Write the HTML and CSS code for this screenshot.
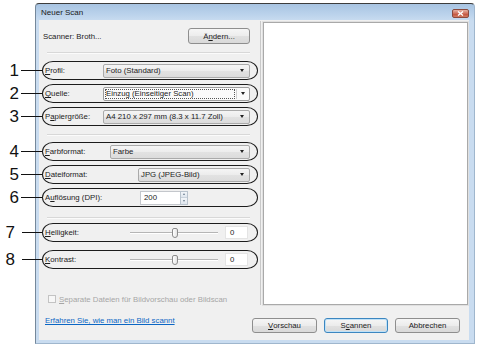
FILE: index.html
```html
<!DOCTYPE html>
<html lang="de">
<head>
<meta charset="utf-8">
<title>Neuer Scan</title>
<link rel="stylesheet" href="styles.css">
</head>
<body>
<div class="window">
  <div class="titlebar">
    <span class="title">Neuer Scan</span>
    <span class="close"><svg width="7" height="5" viewBox="0 0 7 5"><path d="M1 0.5 L6 4.5 M6 0.5 L1 4.5" stroke="#fff" stroke-width="1.4" fill="none"/></svg></span>
  </div>
  <div class="client">
    <div class="settings">
      <div class="scanner-row">
        <span class="label">Scanner: Broth...</span>
        <button class="btn btn--change">Ä<u>n</u>dern...</button>
      </div>
      <div class="sep sep--a"></div>

      <div class="row">
        <span class="callout"><span class="num">1</span><span class="leader"></span></span>
        <span class="label"><u>P</u>rofil:</span>
        <span class="combo combo--wide"><span class="value">Foto (Standard)</span><span class="arrow"></span></span>
      </div>
      <div class="row">
        <span class="callout"><span class="num">2</span><span class="leader"></span></span>
        <span class="label"><u>Q</u>uelle:</span>
        <span class="combo combo--wide combo--edit"><span class="field">Einzug (Einseitiger Scan)</span><span class="drop"><span class="arrow"></span></span></span>
      </div>
      <div class="row">
        <span class="callout"><span class="num">3</span><span class="leader"></span></span>
        <span class="label">P<u>a</u>piergröße:</span>
        <span class="combo combo--wide"><span class="value">A4 210 x 297 mm (8.3 x 11.7 Zoll)</span><span class="arrow"></span></span>
      </div>
      <div class="sep sep--b"></div>

      <div class="row">
        <span class="callout"><span class="num">4</span><span class="leader"></span></span>
        <span class="label"><u>F</u>arbformat:</span>
        <span class="combo combo--mid"><span class="value">Farbe</span><span class="arrow"></span></span>
      </div>
      <div class="row">
        <span class="callout"><span class="num">5</span><span class="leader"></span></span>
        <span class="label"><u>D</u>ateiformat:</span>
        <span class="combo combo--narrow"><span class="value">JPG (JPEG-Bild)</span><span class="arrow"></span></span>
      </div>
      <div class="row">
        <span class="callout"><span class="num">6</span><span class="leader"></span></span>
        <span class="label">A<u>u</u>flösung (DPI):</span>
        <span class="spin"><span class="spin-input">200</span><span class="spin-btns"><span class="spin-up"></span><span class="spin-down"></span></span></span>
      </div>
      <div class="sep sep--c"></div>

      <div class="row">
        <span class="callout callout--gap"><span class="num">7</span><span class="leader"></span></span>
        <span class="label"><u>H</u>elligkeit:</span>
        <span class="slider-group"><span class="slider"><span class="thumb"></span></span><span class="value-box">0</span></span>
      </div>
      <div class="row row--spaced">
        <span class="callout callout--gap"><span class="num">8</span><span class="leader"></span></span>
        <span class="label"><u>K</u>ontrast:</span>
        <span class="slider-group"><span class="slider"><span class="thumb"></span></span><span class="value-box">0</span></span>
      </div>

      <div class="check-row">
        <span class="check"></span>
        <span class="check-label"><u>S</u>eparate Dateien für Bildvorschau oder Bildscan</span>
      </div>
    </div>

    <div class="preview"><div class="preview-box"></div></div>

    <div class="footer">
      <a class="link" href="#">Erfahren Sie, wie man ein Bild scannt</a>
      <div class="buttons">
        <button class="btn btn--wide"><u>V</u>orschau</button>
        <button class="btn btn--default">S<u>c</u>annen</button>
        <button class="btn btn--wide">Abbrechen</button>
      </div>
    </div>
  </div>
</div>
</body>
</html>
```

FILE: styles.css
```css
* { box-sizing: border-box; }

html, body {
  margin: 0;
  padding: 0;
  background: #ffffff;
}

body {
  width: 500px;
  height: 350px;
  overflow: hidden;
  font-family: "Liberation Sans", Arial, sans-serif;
  font-size: 7.8px;
  color: #1b1b1b;
}

/* window frame */
.window {
  margin: 3px 0 0 35px;
  width: 440px;
  height: 341px;
  border: 1px solid #9fb6cd;
  border-top-color: #3d3d3d;
  border-left-color: #75889b;
  border-radius: 4px 4px 0 0;
  background: linear-gradient(#a8c4e2, #bad2eb 10px, #c9dcf0 17px, #c9dcf0);
  padding: 0 5px 3px 3px;
  display: flex;
  flex-direction: column;
}

.titlebar {
  height: 16px;
  display: flex;
  align-items: flex-end;
  padding: 0 0 2px 2px;
}

.title {
  font-size: 8px;
  line-height: 10px;
  color: #1a1a1a;
}

.close {
  margin-left: auto;
  width: 17px;
  height: 9px;
  border: 1px solid #8a4a3e;
  border-radius: 2px;
  background: linear-gradient(#e6b2a4, #cf6e5a 50%, #c0513c 55%, #d37c62);
  display: flex;
  align-items: center;
  justify-content: center;
}

.close svg { display: block; }

/* client area */
.client {
  flex: 1;
  background: #f0f0f0;
  display: grid;
  grid-template-columns: 220px 1fr;
  grid-template-rows: 1fr auto;
  padding-bottom: 7px;
}

.settings {
  grid-column: 1;
  grid-row: 1;
  padding: 7px 1px 0 3px;
  display: flex;
  flex-direction: column;
}

.scanner-row {
  height: 18px;
  display: flex;
  align-items: center;
  padding: 0 8px 0 1px;
}

.label {
  flex: 1;
  white-space: nowrap;
}

.sep {
  height: 2px;
  border-top: 1px solid #d8d8d8;
  border-bottom: 1px solid #fbfbfb;
  margin-left: 5px;
  margin-right: 8px;
}
.sep--a { margin-top: 7px; margin-bottom: 5px; }
.sep--b { margin-top: 6px; margin-bottom: 4px; }
.sep--c { margin-top: 8px; margin-bottom: 2px; }

/* annotated rows */
.row {
  position: relative;
  height: 23px;
  display: flex;
  align-items: center;
  padding: 0 8px 0 3px;
}

.row--spaced { margin-top: 4px; }

.row::before {
  content: "";
  position: absolute;
  left: 0;
  right: 0;
  top: 2px;
  bottom: 2px;
  border: 1.5px solid #1c1c1c;
  border-radius: 11px / 50%;
  pointer-events: none;
}

.callout {
  position: absolute;
  right: 100%;
  top: 0;
  bottom: 0;
  display: flex;
  align-items: center;
}

.num {
  font-size: 17px;
  line-height: 17px;
  color: #111;
  margin-right: 2px;
}

.leader {
  width: 21px;
  height: 1.6px;
  background: #111;
}

.callout--gap .num { margin-right: 7px; }
.callout--gap .leader { width: 20px; }

/* combo boxes */
.combo {
  height: 14px;
  display: flex;
  align-items: center;
  border: 1px solid #aaaaaa;
  border-radius: 2px;
  background: linear-gradient(#f5f5f5, #ececec 50%, #e2e2e2 51%, #dcdcdc);
  padding: 0 5px 0 2px;
  white-space: nowrap;
}

.combo--wide { width: 147px; }
.combo--mid { width: 140px; }
.combo--narrow { width: 112px; }

.combo .value {
  flex: 1;
  overflow: hidden;
}

.arrow {
  width: 0;
  height: 0;
  border-left: 2.5px solid transparent;
  border-right: 2.5px solid transparent;
  border-top: 3px solid #222;
}

.combo--edit {
  background: #fafafa;
  border-color: #9c9c9c;
  padding: 1px;
}

.combo--edit .field {
  flex: 1;
  height: 100%;
  display: flex;
  align-items: center;
  padding-left: 1px;
  outline: 1px dotted #555;
  outline-offset: -1px;
}

.combo--edit .drop {
  width: 12px;
  height: 100%;
  margin-left: 1px;
  border-left: 1px solid #cfcfcf;
  display: flex;
  align-items: center;
  justify-content: center;
}

/* spinner */
.spin {
  width: 48px;
  height: 14px;
  margin-right: 62px;
  display: flex;
}

.spin-input {
  flex: 1;
  background: #fff;
  border: 1px solid #c4c7cc;
  border-right: none;
  padding-left: 3px;
  display: flex;
  align-items: center;
}

.spin-btns {
  width: 8px;
  display: flex;
  flex-direction: column;
  border: 1px solid #b9c3cd;
}

.spin-up, .spin-down {
  flex: 1;
  background: linear-gradient(#f3f6f9, #dfe6ee);
  display: flex;
  align-items: center;
  justify-content: center;
}

.spin-up { border-bottom: 1px solid #c9d2db; }

.spin-up::after, .spin-down::after {
  content: "";
  width: 0;
  height: 0;
  border-left: 1.5px solid transparent;
  border-right: 1.5px solid transparent;
}
.spin-up::after { border-bottom: 2px solid #6b7d8f; }
.spin-down::after { border-top: 2px solid #6b7d8f; }

/* sliders */
.slider-group {
  display: flex;
  align-items: center;
  gap: 7px;
  margin-right: 2px;
}

.slider {
  width: 88px;
  height: 12px;
  display: flex;
  align-items: center;
  background: linear-gradient(transparent 5px, #b5b5b5 5px, #b5b5b5 6px, #ffffff 6px, #ffffff 7px, transparent 7px);
}

.thumb {
  width: 6px;
  height: 10px;
  margin-left: 42px;
  border: 1px solid #8c8c8c;
  border-radius: 2px 2px 3px 3px;
  background: linear-gradient(to right, #ffffff, #e4e4e4);
}

.value-box {
  width: 23px;
  height: 13px;
  background: #fff;
  border: 1px solid #e4e4e4;
  padding-left: 4px;
  display: flex;
  align-items: center;
}

/* checkbox */
.check-row {
  height: 12px;
  margin-top: 22px;
  margin-left: 6px;
  display: flex;
  align-items: center;
}

.check {
  width: 8px;
  height: 8px;
  border: 1px solid #c3c3c3;
  background: #f7f7f7;
  margin-right: 3px;
}

.check-label {
  color: #a6a6a6;
  white-space: nowrap;
}

/* preview */
.preview {
  grid-column: 2;
  grid-row: 1;
  margin: 1px 1px 13px 1px;
  border-left: 1px solid #c9c9c9;
  padding: 1px 0 0 2px;
}

.preview-box {
  height: 100%;
  background: #fff;
  border: 1px solid #a9a9a9;
  box-shadow: 0 0 0 1px #e0e0e0;
}

/* footer */
.footer {
  grid-column: 1 / -1;
  grid-row: 2;
  height: 15px;
  display: flex;
  align-items: flex-start;
  padding: 0 9px 0 6px;
}

.link {
  color: #0b66c4;
  text-decoration: underline;
  line-height: 11px;
  margin-top: -3px;
  white-space: nowrap;
}

.buttons {
  margin-left: auto;
  display: flex;
  gap: 7px;
}

.btn {
  font: inherit;
  color: #1b1b1b;
  height: 15px;
  width: 64px;
  padding: 0;
  border: 1px solid #8e8e8e;
  border-radius: 3px;
  background: linear-gradient(#f6f6f6, #ececec 50%, #e1e1e1 51%, #d9d9d9);
  display: flex;
  align-items: center;
  justify-content: center;
}

.btn--wide { width: 65px; }

.btn--default {
  border-color: #3b86c0;
  box-shadow: inset 0 0 0 1px #bfe1f7;
}

.btn--change {
  width: 62px;
  height: 16px;
}
```
